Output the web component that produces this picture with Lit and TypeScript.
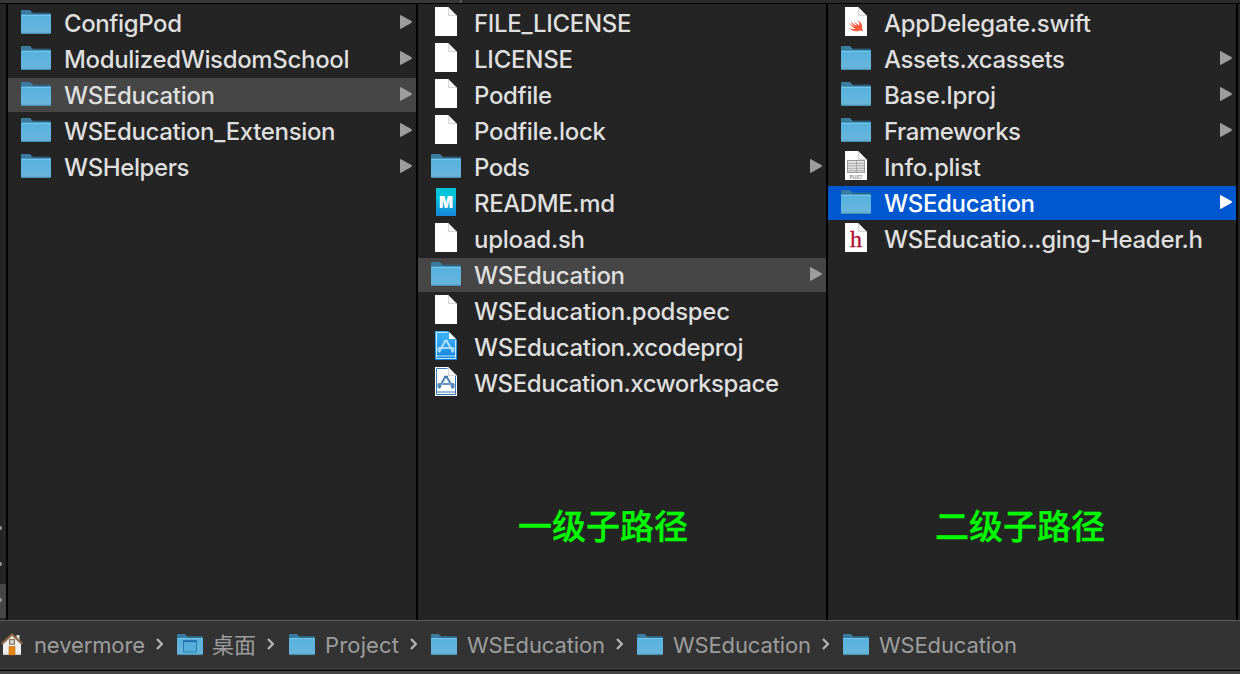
import { LitElement, html, svg, css } from "lit";
import { customElement, property } from "lit/decorators.js";

type Kind = "folder" | "desktop" | "file" | "md" | "xcodeproj" | "xcworkspace" | "swift" | "plist" | "header" | "home";
interface Item { name: string; kind: Kind; width: number; arrow?: boolean; state?: "current" | "active"; }

const f = (name: string, width: number, state?: "current" | "active"): Item => ({ name, kind: "folder", width, arrow: true, state });
const d = (name: string, width: number, kind: Kind = "file"): Item => ({ name, kind, width });

const columns: Item[][] = [
  [
    f("ConfigPod", 118), f("ModulizedWisdomSchool", 285.5), f("WSEducation", 151, "current"),
    f("WSEducation_Extension", 271.5), f("WSHelpers", 125.5),
  ],
  [
    d("FILE_LICENSE", 157.5), d("LICENSE", 99), d("Podfile", 78), d("Podfile.lock", 132), d("Pods", 56, "folder"),
    d("README.md", 141, "md"), d("upload.sh", 111), f("WSEducation", 151, "current"),
    d("WSEducation.podspec", 256), d("WSEducation.xcodeproj", 269.5, "xcodeproj"),
    d("WSEducation.xcworkspace", 305, "xcworkspace"),
  ],
  [
    d("AppDelegate.swift", 207, "swift"), f("Assets.xcassets", 181), f("Base.lproj", 112), f("Frameworks", 137),
    d("Info.plist", 97, "plist"), f("WSEducation", 151, "active"), d("WSEducatio...ging-Header.h", 319, "header"),
  ],
];
columns[1][4].arrow = true;

const crumbs: Item[] = [
  { name: "nevermore", kind: "home", width: 111 },
  { name: "桌面", kind: "desktop", width: 44 },
  { name: "Project", kind: "folder", width: 74 },
  { name: "WSEducation", kind: "folder", width: 138 },
  { name: "WSEducation", kind: "folder", width: 138 },
  { name: "WSEducation", kind: "folder", width: 138 },
];

const folder = (desktop = false) => svg`
  <defs>
    <linearGradient id="front" x1="0" y1="0" x2="0" y2="1">
      <stop offset="0" stop-color="#55b1de"/><stop offset=".85" stop-color="#67b6dc"/><stop offset="1" stop-color="#579fbf"/>
    </linearGradient>
  </defs>
  <path d="M0 1.2Q0 0 1.2 0H9L11.5 2.7H28.8Q30 2.7 30 4V23H0Z" fill="#397c9f"/>
  <path d="M12 3.6H30" stroke="#2c5f7c" stroke-width="1"/>
  <path d="M0 4.7H30V22.8Q30 24 28.8 24H1.2Q0 24 0 22.8Z" fill="url(#front)"/>
  <path d="M.5 5.3H29.5" stroke="#7bcdf0"/>
  <path d="M.5 23.5H29.5" stroke="#4c92b2"/>
  ${desktop ? svg`<path d="M7.5 8H22.5V20.5H7.5Z" fill="#58aeda" stroke="#2776ad" stroke-width="1.1"/><path d="M7 8.2H23" stroke="#216da9" stroke-width="2"/>` : null}`;

const page = svg`
  <path d="M0 0H13L22 9V29H0Z" fill="#fff"/>
  <path d="M13 0L22 9H13Z" fill="#f4f4f4"/>
  <path d="M13.5 1V8.5H21" fill="none" stroke="#cfcfcf" stroke-width=".8"/>`;

const xcode = (ink: string, frame: string) => svg`
  <path d="M12.5 1.5H1.5V27.5H20.5V9" fill="none" stroke="${frame}" stroke-width="1"/>
  <path d="M2 25H20" stroke="${frame}" stroke-width="1"/>
  <g fill="none" stroke="${ink}">
    <path d="M10.6 9.5L5.2 18.8L4.2 21.5M11.4 9.5L16.8 18.8L17.8 21.5" stroke-width="2"/>
    <path d="M3 17H19" stroke-width="1.9"/>
    <path d="M9.2 9.5H12.8M3.2 17V20.4M18.8 17V20.4" stroke-width="1.3"/>
  </g>`;

const documentArt = (kind: Kind) => {
  switch (kind) {
    case "md":
      return svg`<defs><linearGradient id="md" x1="0" y1="0" x2="0" y2="1"><stop offset=".3" stop-color="#00c5d8"/><stop offset="1" stop-color="#1786dc"/></linearGradient></defs>
        <rect x="1" y="1" width="20" height="28" fill="url(#md)"/>
        <text x="4" y="20.8" textLength="14" lengthAdjust="spacingAndGlyphs" class="md">M</text>`;
    case "xcodeproj":
      return svg`<defs><linearGradient id="xc" x1="0" y1="0" x2="0" y2="1"><stop offset=".2" stop-color="#3aaef5"/><stop offset="1" stop-color="#0d82dc"/></linearGradient></defs>
        <path d="M0 0H13L22 9V29H0Z" fill="url(#xc)"/>${xcode("#b3def8", "#c5e8fc")}
        <path d="M14 1V8H21Z" fill="#fff"/>`;
    case "xcworkspace":
      return svg`${page}${xcode("#3d79ad", "#3279b6")}
        <path d="M10.6 11L6 19M11.4 11L16 19M4 17H18" stroke="#a9cbe3" stroke-width=".6" fill="none"/>`;
    case "swift":
      return svg`${page}<path d="M3.4 15.2C6.1 17.8 8 19.1 9.8 20C7.7 18 6.2 15.9 5.2 14.2C8 16.6 10 18 12 19.1C10.7 17.3 9.8 15.8 9 14.2C11.2 16.2 12.8 17.5 14.1 18.5C14.6 16.6 13.9 14.8 12.5 13.1C16.7 15.6 17.6 18.8 17 21.2C18 22.5 18 24 17.3 24.6C16.4 23.5 15.4 23.4 14.4 23.8C10.8 25.2 6.6 23.9 4 20.8C6.5 22.1 8.5 22.5 10.5 21.8C7.5 20.3 5.3 18.2 3.4 15.2Z" fill="#f8593a"/>`;
    case "plist":
      return svg`${page}<rect x="2.5" y="9.5" width="17" height="12" fill="#e4e4e4" stroke="#9c9c9c"/>
        <path d="M3 12.3H19M3 14.8H19M3 17.3H19M3 19.7H19M11.5 10V21" stroke="#a2a2a2" stroke-width=".9"/>
        <text x="11" y="27.5" text-anchor="middle" class="plist">PLIST</text>`;
    case "header":
      return svg`${page}<text x="11" y="24" text-anchor="middle" class="header">h</text>`;
    default:
      return page;
  }
};

@customElement("file-icon")
class FileIcon extends LitElement {
  static styles = css`
    :host { display: flex; justify-content: center; align-items: center; }
    svg { display: block; overflow: visible; }
    .md { font: 900 15.5px Inter, sans-serif; fill: #fff; }
    .plist { font: 700 4.7px Inter, sans-serif; fill: #8b8b8b; }
    .header { font: 24px "Liberation Serif", serif; fill: #b11030; stroke: #b11030; stroke-width: .3px; }
  `;
  @property() kind: Kind = "file";
  @property({ type: Boolean }) small = false;

  render() {
    if (this.kind === "home") {
      return html`<svg width="22" height="22" viewBox="0 0 22 22">
        <path d="M15.5 2H18.5V9H15.5Z" fill="#ddd"/>
        <path d="M2 10L11 2L20 10V22H2Z" fill="#eee"/>
        <path d="M2 20.5H20V22H2Z" fill="#cfcfcf"/>
        <path d="M.8 10.8L11 1.5L21.2 10.8" fill="none" stroke="#8d6846" stroke-width="2.3"/>
        <rect x="8.6" y="6.6" width="4.8" height="4.6" fill="#d5dde2" stroke="#8d6e50" stroke-width="1.2"/>
        <rect x="8" y="13.5" width="6" height="8.5" fill="#e58510" stroke="#b8701b" stroke-width=".6"/>
      </svg>`;
    }
    if (this.kind === "folder" || this.kind === "desktop") {
      return html`<svg width=${this.small ? 26 : 30} height=${this.small ? 21 : 24} viewBox="0 0 30 24" preserveAspectRatio="none">${folder(this.kind === "desktop")}</svg>`;
    }
    return html`<svg width="22" height="29" viewBox="0 0 22 29">${documentArt(this.kind)}</svg>`;
  }
}

@customElement("fitted-label")
class FittedLabel extends LitElement {
  static styles = css`
    :host { display: block; flex: none; }
    svg { display: block; width: 100%; height: 34px; overflow: visible; }
    text { fill: currentColor; }
  `;
  @property() text = "";
  @property({ type: Number }) width = 0;
  render() {
    return html`<svg style="width:${this.width}px"><text x="0" y="26" textLength=${this.width} lengthAdjust="spacing">${this.text}</text></svg>`;
  }
}

@customElement("app-root")
class AppRoot extends LitElement {
  static styles = css`
    :host {
      display: grid; grid-template-rows: 3px 617px 50px 4px; position: relative;
      width: 1240px; height: 674px; overflow: hidden; background: #242424;
      font: 450 24px/34px Inter, "Noto Sans CJK SC", sans-serif; color: #dfdfdf;
    }
    .top { display: grid; grid-template-columns: 460px 2px 1fr; background: #2b2b2b; }
    .top-left { background: #373737; }
    .top-mark { background: #595959; }
    .browser { display: grid; grid-template-columns: 6px repeat(3, 410px) 4px; border-top: 1px solid #000; box-sizing: border-box; }
    .sliver { display: flex; flex-direction: column; justify-content: flex-end; gap: 2px; padding-bottom: 2px; }
    .sliver-row { height: 34px; display: flex; align-items: center; box-sizing: border-box; padding-bottom: 2px; }
    .sliver-row.current { background: #464646; }
    .tip { width: 2px; height: 4px; background: #999; border-radius: 0 2px 2px 0; }
    .column { border-left: 2px solid #000; padding-top: 2px; display: flex; flex-direction: column; gap: 2px; }
    .edge { border-left: 2px solid #000; }
    .row { height: 34px; display: grid; grid-template-columns: 30px 1fr 12px; column-gap: 13px; align-items: center; padding: 0 4px 0 13px; box-sizing: border-box; flex: none; }
    .row file-icon { padding-bottom: 3px; }
    .row file-icon[kind="folder"] { padding-bottom: 2px; }
    .row.current { background: #464646; }
    .row.active { background: #0058d0; color: #fff; }
    .arrow { fill: #9d9d9d; display: block; margin-bottom: 2px; }
    .active .arrow { fill: #fff; }
    .path { display: flex; align-items: center; background: #333; border-top: 1px solid #585858; box-sizing: border-box; font-size: 22px; font-weight: 400; color: #9d9d9d; padding: 0 0 3px 1px; }
    .crumb { display: flex; align-items: center; }
    .crumb file-icon { margin-right: 9px; }
    .crumb.home file-icon { margin-right: 11px; }
    .crumb.folder file-icon { margin-right: 9.6px; }
    .chevron { display: block; margin: 0 14px 0 11px; }
    .crumb.desktop .chevron { margin-right: 15px; }
    .crumb.folder .chevron { margin-left: 11.4px; }
    .bottom { border-top: 1px solid #000; background: #444; }
    .note { position: absolute; top: 501px; font: 500 34px/48px "Noto Sans CJK SC", sans-serif; color: #00f900; white-space: nowrap; -webkit-text-stroke: .35px #00f900; }
    .note.first { left: 518px; }
    .note.second { left: 935px; }
  `;

  private row(item: Item) {
    return html`<div class="row ${item.state ?? ""}">
      <file-icon kind=${item.kind}></file-icon>
      <fitted-label text=${item.name} width=${item.width}></fitted-label>
      ${item.arrow ? html`<svg class="arrow" width="12" height="14" viewBox="0 0 12 14"><path d="M0 1Q0-.4 1.4.4L11.3 6.1Q12.5 7 11.3 7.9L1.4 13.6Q0 14.4 0 13Z"/></svg>` : null}
    </div>`;
  }

  private crumb(item: Item, index: number) {
    return html`<div class="crumb ${item.kind}">
      <file-icon kind=${item.kind} small></file-icon>
      <fitted-label text=${item.name} width=${item.width}></fitted-label>
      ${index < crumbs.length - 1 ? html`<svg class="chevron" width="7" height="12" viewBox="0 0 7 12"><path d="M1 1L5.8 6L1 11" fill="none" stroke="#b3b3b3" stroke-width="2.3"/></svg>` : null}
    </div>`;
  }

  render() {
    return html`
      <div class="top"><div class="top-left"></div><div class="top-mark"></div></div>
      <main class="browser">
        <div class="sliver">
          <div class="sliver-row"><div class="tip"></div></div>
          <div class="sliver-row"><div class="tip"></div></div>
          <div class="sliver-row current"><div class="tip"></div></div>
        </div>
        ${columns.map((items) => html`<section class="column">${items.map((i) => this.row(i))}</section>`)}
        <div class="edge"></div>
      </main>
      <nav class="path">${crumbs.map((c, i) => this.crumb(c, i))}</nav>
      <div class="bottom"></div>
      <div class="note first">一级子路径</div>
      <div class="note second">二级子路径</div>
    `;
  }
}
